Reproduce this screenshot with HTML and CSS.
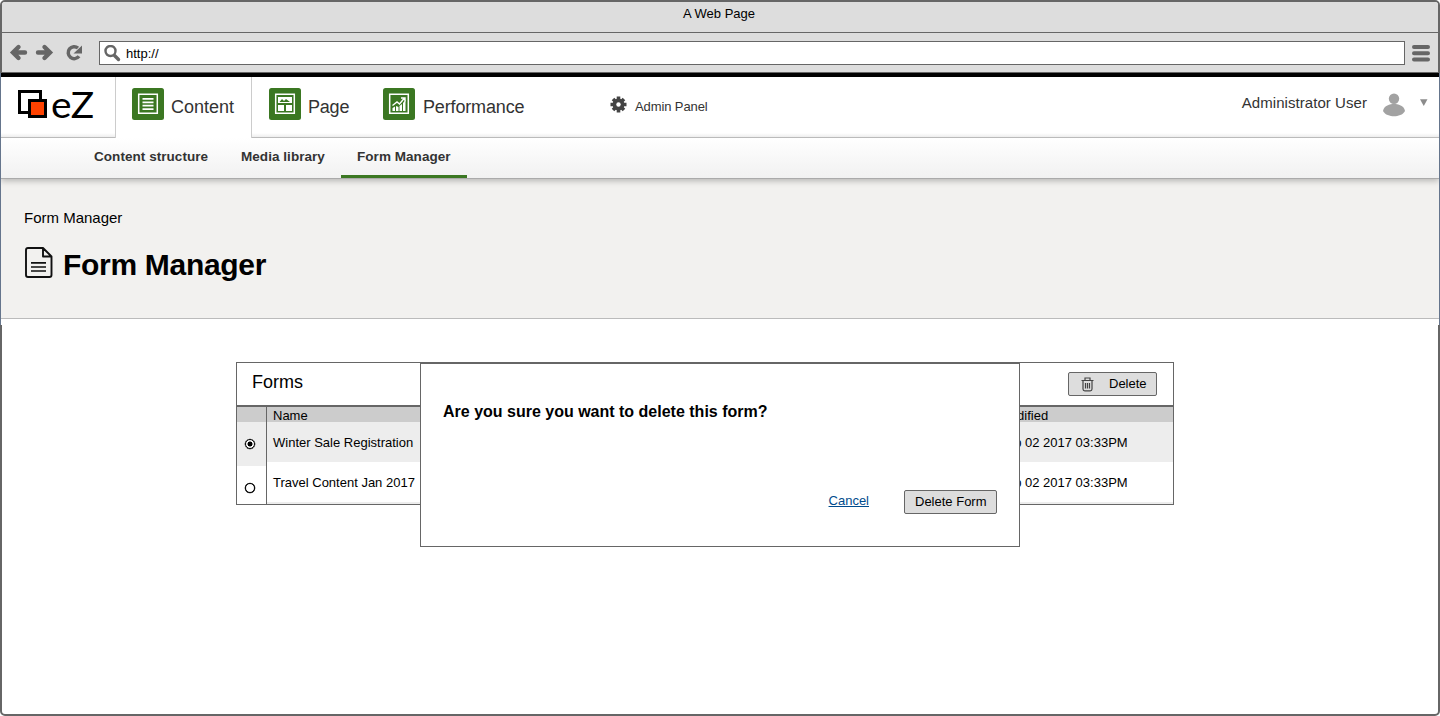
FILE: index.html
```html
<!DOCTYPE html>
<html lang="en">
<head>
<meta charset="utf-8">
<title>A Web Page</title>
<link rel="stylesheet" href="styles.css">
</head>
<body>
<div class="window">
  <div class="titlebar">A Web Page</div>
  <div class="toolbar">
    <svg class="nav-icons" width="97" height="39" viewBox="2 33 97 39">
      <g fill="none" stroke="#666" stroke-width="4.400">
        <path d="M25 52.500H13.500M18.500 47l-5.500 5.500 5.500 5.500" stroke-linecap="round"/>
        <path d="M38 52.500H49.500M44.500 47l5.500 5.500-5.500 5.500" stroke-linecap="round"/>
        <path d="M79 56.300A6 6 0 1 1 78 48" stroke-width="3.500"/>
      </g>
      <path d="M82 45.500V53.500h-8.500z" fill="#666"/>
    </svg>
    <div class="address">
      <svg width="18" height="18" viewBox="0 0 18 18" fill="none" stroke="#666"><circle cx="6.500" cy="6" r="5" stroke-width="2.400"/><path d="M10.500 10.500l4 4" stroke-width="3.400" stroke-linecap="round"/></svg>
      <span>http://</span>
    </div>
    <svg class="burger" width="18" height="18" viewBox="0 0 18 18" stroke="#666" stroke-width="4" stroke-linecap="round"><path d="M2 3h14M2 9.200h14M2 15.400h14"/></svg>
  </div>
  <div class="app">
    <header class="header">
      <div class="logo">
        <svg width="30" height="30" viewBox="0 0 30 30"><path d="M1.500 1.500h21v21h-21z" fill="#fff" stroke="#000" stroke-width="3"/><path d="M11.500 10.500h16v16h-16z" fill="#ff4200" stroke="#000" stroke-width="3"/></svg>
        <span class="logo-name">eZ</span>
      </div>
      <div class="tab tab-active">
        <svg class="tile" width="32" height="32" viewBox="0 0 32 32"><rect width="32" height="32" rx="2.500" fill="#3b7722"/><g fill="none" stroke="#fff"><path d="M6.700 6.200h18.600v19H6.700z" stroke-width="1.500"/><path d="M10.500 10.800h11M10.500 14.300h11M10.500 17.700h11M10.500 21.200h11" stroke-width="1.800"/></g></svg>
        <span>Content</span>
      </div>
      <div class="tab tab-page">
        <svg class="tile" width="32" height="32" viewBox="0 0 32 32"><rect width="32" height="32" rx="2.500" fill="#3b7722"/><path d="M6.700 6.200h18.600v19H6.700z" fill="none" stroke="#fff" stroke-width="1.500"/><path d="M9 9h14v6H9zM9 17h6v6H9zM17 17h6v6h-6z" fill="#fff"/><path d="M10.500 14l2.500-3 2 2 2-2 4 3z" fill="#3b7722"/></svg>
        <span>Page</span>
      </div>
      <div class="tab tab-perf">
        <svg class="tile" width="32" height="32" viewBox="0 0 32 32"><rect width="32" height="32" rx="2.500" fill="#3b7722"/><path d="M6.700 6.200h18.600v19H6.700z" fill="none" stroke="#fff" stroke-width="1.500"/><path d="M9.500 20l2.500-1.500V23H9.500zM13 18l2.500 1V23H13zM16.500 18l2.500-2v7h-2.500zM20 15l2.500-3v11H20z" fill="#fff"/><path d="M9.500 17.500l4.500-3.500 2.500 2 5-6M18 10h4v3.500" fill="none" stroke="#fff" stroke-width="1.400"/></svg>
        <span>Performance</span>
      </div>
      <div class="admin">
        <svg width="17" height="17" viewBox="-8.500 -8.500 17 17"><g stroke="#444" stroke-width="3.600"><path d="M0-8V8M-8 0H8M-5.500-5.500L5.500 5.500M5.500-5.500L-5.500 5.500"/></g><circle r="5.900" fill="#444"/><circle r="2.200" fill="#fff"/></svg>
        <span>Admin Panel</span>
      </div>
      <div class="user">
        <span>Administrator User</span>
        <svg width="46" height="24" viewBox="0 0 46 24" fill="#a2a2a2"><circle cx="11" cy="5.800" r="5.200"/><path d="M0 18C1 12.500 7 11 11 11s10 1.500 11 7c-2 4-7 5.200-11 5.200S2 22 0 18z"/><path d="M37 6.300h7.500L40.750 13z" fill="#8c8c8c"/></svg>
      </div>
    </header>
    <nav class="subnav">
      <span class="sub-structure">Content structure</span>
      <span class="sub-media">Media library</span>
      <span class="sub-forms">Form Manager</span>
    </nav>
    <section class="hero">
      <div class="crumb">Form Manager</div>
      <h1 class="title">
        <svg width="28" height="31" viewBox="0 0 28 31" fill="none" stroke="#111" stroke-width="1.900" stroke-linejoin="round"><path d="M18 1H3Q1 1 1 3v25q0 2 2 2h21.500q2 0 2-2V9.500zM18 1v8.500h8.500"/><path d="M6 15.800h15M6 20h15M6 24h15" stroke-width="1.700"/></svg>
        <span>Form Manager</span>
      </h1>
    </section>
    <div class="app-foot"></div>
  </div>
  <main class="main">
    <div class="panel">
      <div class="panel-head">
        <h2 class="panel-title">Forms</h2>
        <button class="btn btn-trash">
          <svg width="13" height="15" viewBox="0 0 13 15" fill="none" stroke="#444" stroke-width="1.200"><path d="M.5 3.500h12M4 3V1h5v2M2 3.500V12q0 1.800 1.800 1.800h5.400q1.800 0 1.800-1.800V3.500M4.500 6v5.500M6.500 6v5.500M8.500 6v5.500"/></svg>
          <span>Delete</span>
        </button>
      </div>
      <div class="grid">
        <div class="radios">
          <div class="radio-head"></div>
          <div class="radio-cell radio-shaded"><span class="radio radio-on"></span></div>
          <div class="radio-cell"><span class="radio"></span></div>
        </div>
        <div class="rows">
          <div class="row row-head"><span>Name</span><span>Modified</span></div>
          <div class="row row-shaded"><span>Winter Sale Registration</span><span>Feb 02 2017 03:33PM</span></div>
          <div class="row row-last"><span>Travel Content Jan 2017</span><span>Feb 02 2017 03:33PM</span></div>
        </div>
      </div>
    </div>
    <div class="dialog">
      <p class="question">Are you sure you want to delete this form?</p>
      <div class="actions">
        <a class="cancel">Cancel</a>
        <button class="btn btn-confirm">Delete Form</button>
      </div>
    </div>
  </main>
</div>
</body>
</html>
```
FILE: styles.css
```css
* { box-sizing: border-box; }
body { margin: 0; background: #fff; font: 13px/15px "Liberation Sans", Arial, sans-serif; color: #000; }
svg { display: block; flex: none; }
span { white-space: nowrap; }
.window { width: 1440px; height: 716px; border: 2px solid #666; border-radius: 5px; background: #fff; display: flex; flex-direction: column; }
.titlebar { height: 31px; background: #ddd; border-bottom: 1px solid #666; border-radius: 3px 3px 0 0; text-align: center; padding-top: 4px; padding-right: 2px; }
.toolbar { height: 40px; background: #ddd; border-bottom: 1px solid #666; display: flex; }
.address { width: 1306px; height: 24px; margin-top: 8px; border: 1px solid #666; background: #fff; display: flex; padding: 3px 0 0 4px; }
.address span { margin: 1px 0 0 4px; }
.burger { margin: 11px 0 0 7px; }

.app { margin: 0 -2px; border: solid #65758c; border-width: 0 1px; }
.header { height: 65px; border-top: 4px solid #000; background: linear-gradient(#fff 56px, #ededed); display: flex; color: #333; border-bottom: 1px solid #bbb; }
.logo { width: 114px; padding: 13px 0 0 17px; display: flex; }
.logo-name { font: 36px/36px Lato, sans-serif; color: #000; margin: -4px 0 0 3px; letter-spacing: -0.4px; transform: scaleX(1.08); transform-origin: left; }
.tab { display: flex; padding-top: 11px; font-size: 18px; line-height: 20px; }
.tab span { margin: 9px 0 0 7px; }
.tab-active { width: 137px; height: 61px; background: #fff; border: solid #ccc; border-width: 0 1px; padding-left: 16px; }
.tab-page { width: 114px; padding-left: 17px; letter-spacing: -0.2px; }
.tab-perf { width: 244px; padding-left: 17px; letter-spacing: -0.15px; }
.tab-perf span { margin-left: 8px; }
.admin { display: flex; padding-top: 19px; width: 300px; }
.admin span { margin: 3px 0 0 8px; letter-spacing: -0.1px; }
.user { display: flex; margin-left: auto; padding: 16px 10px 0 0; font-size: 15px; line-height: 20px; }
.user span { margin-right: 16px; letter-spacing: 0.06px; }
.subnav { position: relative; height: 41px; background: linear-gradient(#fff, #f1f1f1); border-bottom: 1px solid #aaa; box-shadow: 0 2px 6px rgba(0,0,0,.25); clip-path: inset(0 0 -10px 0); display: flex; font-size: 13.5px; font-weight: bold; color: #333; padding-left: 93px; letter-spacing: 0.05px; }
.subnav span { padding-top: 11px; height: 40px; }
.sub-structure { width: 147px; }
.sub-media { width: 100px; }
.subnav .sub-forms { width: 126px; padding-left: 16px; border-bottom: 3px solid #3b7722; }
.hero { height: 140px; background: #f2f1ef; border-bottom: 1px solid #bbb; padding: 30px 0 0 23px; }
.crumb { font-size: 15px; line-height: 18px; }
.title { display: flex; margin: 20px 0 0 1px; font-size: 30px; line-height: 36px; }
.title span { margin-left: 10px; letter-spacing: -0.3px; }
.app-foot { height: 6px; background: #fff; }

.main { position: relative; padding: 37px 0 0 234px; }
.panel { width: 938px; height: 143px; border: 1px solid #666; }
.panel-head { height: 44px; border-bottom: 2px solid #666; display: flex; justify-content: space-between; padding: 9px 16px 0 15px; }
.panel-title { margin: 0; font-size: 18px; line-height: 20px; font-weight: normal; }
.btn { height: 24px; border: 1px solid #666; border-radius: 2px; background: #ddd; color: #000; font: inherit; padding: 0; display: flex; }
.btn-trash { width: 89px; padding: 4px 0 0 12px; }
.btn-trash span { margin: -1px 0 0 15px; }
.grid { display: flex; height: 97px; }
.radios { width: 30px; border-right: 1px solid #666; }
.radio-head { height: 15px; background: #ccc; }
.radio-cell { height: 44px; display: flex; padding: 17px 0 0 8px; }
.radio-shaded { background: #ededed; }
.radio { width: 10px; height: 10px; border: 1.2px solid #000; border-radius: 50%; background: #fff; box-shadow: 0 0 0 .3px #000; }
.radio-on { background: radial-gradient(circle, #000 2.2px, #fff 2.8px); }
.rows { flex: 1; }
.row { display: grid; grid-template-columns: 726px 1fr; padding-left: 6px; height: 40px; padding-top: 13px; }
.row-head { height: 15px; background: #ccc; padding-top: 1px; }
.row-shaded { background: #ededed; }
.row-last { height: 42px; border-bottom: 2px solid #ededed; }
.dialog { position: absolute; left: 418px; top: 38px; width: 600px; height: 184px; background: #fff; border: 1px solid #666; padding: 38px 22px 0; }
.question { margin: 0; font-size: 16px; line-height: 20px; font-weight: bold; }
.actions { display: flex; justify-content: flex-end; margin-top: 68px; }
.cancel { color: #004b8d; text-decoration: underline; margin: 3px 35px 0 0; }
.btn-confirm { width: 93px; padding: 3px 0 0 10px; white-space: nowrap; }
```
